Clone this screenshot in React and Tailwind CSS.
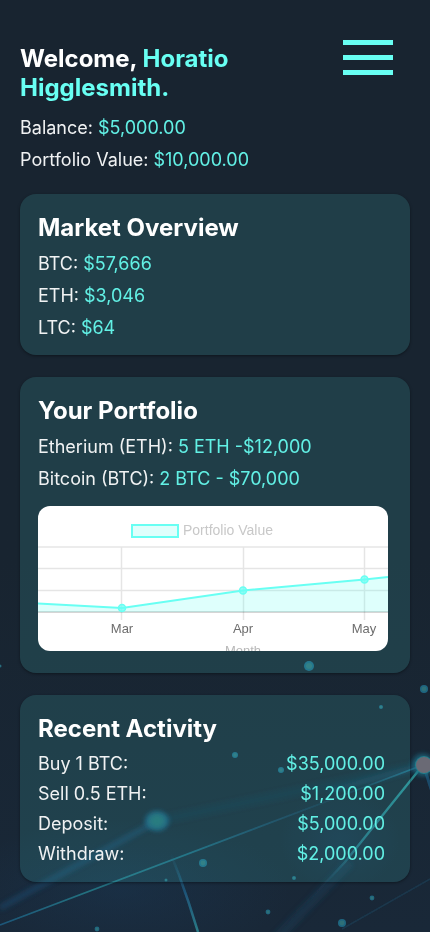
const MARKET = [
  { label: 'BTC:', value: '$57,666' },
  { label: 'ETH:', value: '$3,046' },
  { label: 'LTC:', value: '$64' },
];

const HOLDINGS = [
  { label: 'Etherium (ETH):', value: '5 ETH -$12,000' },
  { label: 'Bitcoin (BTC):', value: '2 BTC - $70,000' },
];

const ACTIVITY = [
  { label: 'Buy 1 BTC:', value: '$35,000.00' },
  { label: 'Sell 0.5 ETH:', value: '$1,200.00' },
  { label: 'Deposit:', value: '$5,000.00' },
  { label: 'Withdraw:', value: '$2,000.00' },
];

const DOTS = [
  [309, 666, 5], [424, 689, 4], [381, 707, 2], [235, 755, 3], [281, 770, 3],
  [203, 863, 4], [166, 880, 1.5], [294, 878, 2], [268, 912, 2.4], [372, 898, 2.4],
  [342, 923, 4], [97, 929, 2.4], [0, 666, 1.5],
];

function NetworkBackdrop() {
  return (
    <svg
      aria-hidden="true"
      viewBox="0 0 430 932"
      preserveAspectRatio="xMidYMax slice"
      className="pointer-events-none absolute inset-0 -z-10 h-full w-full"
    >
      <defs>
        <linearGradient id="thin" gradientUnits="userSpaceOnUse" x1="0" y1="925" x2="423" y2="765">
          <stop offset="0" stopColor="#1d5678" />
          <stop offset="0.2" stopColor="#23707f" />
          <stop offset="0.45" stopColor="#1f6278" />
          <stop offset="0.65" stopColor="#1e5070" stopOpacity="0.6" />
          <stop offset="0.8" stopColor="#1e5070" stopOpacity="0.2" />
          <stop offset="1" stopColor="#23708a" />
        </linearGradient>
        <linearGradient id="ray" gradientUnits="userSpaceOnUse" x1="423" y1="765" x2="280" y2="932">
          <stop offset="0" stopColor="#2b8d90" />
          <stop offset="0.5" stopColor="#24687b" />
          <stop offset="0.7" stopColor="#1d4561" stopOpacity="0.2" />
          <stop offset="1" stopColor="#1b3247" stopOpacity="0" />
        </linearGradient>
        <linearGradient id="leg" gradientUnits="userSpaceOnUse" x1="157" y1="821" x2="198" y2="932">
          <stop offset="0.3" stopColor="#1f5a78" stopOpacity="0" />
          <stop offset="0.65" stopColor="#1f5478" />
          <stop offset="1" stopColor="#2a7a86" />
        </linearGradient>
        <radialGradient id="haze">
          <stop offset="0" stopColor="#1a3a58" stopOpacity="0.4" />
          <stop offset="1" stopColor="#1a3a58" stopOpacity="0" />
        </radialGradient>
        <filter id="soft1" x="-50%" y="-50%" width="200%" height="200%"><feGaussianBlur stdDeviation="0.7" /></filter>
        <filter id="soft3" x="-50%" y="-50%" width="200%" height="200%"><feGaussianBlur stdDeviation="2.5" /></filter>
      </defs>
      <ellipse cx="120" cy="890" rx="170" ry="70" fill="url(#haze)" />
      <ellipse cx="340" cy="840" rx="60" ry="50" fill="url(#haze)" />
      <g filter="url(#soft3)" fill="none">
        <path d="M0 908L157 821" stroke="#1d5078" strokeWidth="5" opacity="0.55" />
        <path d="M157 821L423 765" stroke="#1e5070" strokeWidth="9" opacity="0.14" />
        <path d="M350 862L275 940" stroke="#1d4768" strokeWidth="10" opacity="0.3" />
        <path d="M330 791L423 766" stroke="#1f5f85" strokeWidth="4" opacity="0.4" />
      </g>
      <g filter="url(#soft1)" fill="none">
        <path d="M0 925L423 765" stroke="url(#thin)" strokeWidth="1.8" />
        <path d="M423 765L345 862L280 932" stroke="url(#ray)" strokeWidth="2.4" />
        <path d="M157 821Q180 872 198 932" stroke="url(#leg)" strokeWidth="2.6" />
        <path d="M342 929L430 879" stroke="#1e4560" strokeWidth="1.5" opacity="0.5" />
        <path d="M425 770L433 795" stroke="#1f5a80" strokeWidth="3" opacity="0.7" />
      </g>
      <ellipse cx="157" cy="821" rx="12" ry="10" fill="#1d5f85" filter="url(#soft3)" opacity="0.8" />
      <ellipse cx="157" cy="821" rx="8" ry="7" fill="#216a70" filter="url(#soft3)" />
      {DOTS.map(([x, y, r]) => (
        <g key={`${x}-${y}`} filter="url(#soft1)">
          <circle cx={x} cy={y} r={r} fill="#1f6680" />
          <circle cx={x} cy={y} r={r * 0.6} fill="#2f7078" />
        </g>
      ))}
      <circle cx="423" cy="765" r="11" fill="#1f7088" filter="url(#soft3)" opacity="0.8" />
      <circle cx="424" cy="765" r="9" fill="#237f8c" filter="url(#soft1)" />
      <circle cx="424" cy="765" r="8" fill="#6a6a75" filter="url(#soft1)" />
    </svg>
  );
}

function Rows({ items }) {
  return (
    <dl className="text-lg leading-8 font-normal text-[#f0f2f3]">
      {items.map(({ label, value }) => (
        <div key={label} className="flex gap-[5px]">
          <dt>{label}</dt>
          <dd className="text-[#62f0e5]">{value}</dd>
        </div>
      ))}
    </dl>
  );
}

function Card({ title, className, children }) {
  return (
    <section className={`rounded-2xl bg-[rgba(90,255,243,0.12)] pt-[19px] pr-[22px] pl-[18px] shadow-[0_1px_3px_rgba(0,0,0,0.4)] ${className}`}>
      <h2 className="mb-[6px] text-2xl leading-[29px] font-bold">{title}</h2>
      {children}
    </section>
  );
}

function PortfolioChart() {
  return (
    <svg
      role="img"
      aria-label="Portfolio Value by Month"
      viewBox="0 0 350 145"
      className="mt-[11px] block h-auto w-full rounded-xl bg-white font-['Liberation_Sans',Arial,sans-serif] text-[13px]"
    >
      <g stroke="#000" strokeOpacity="0.1" strokeWidth="1.5" fill="none">
        <path d="M0 41H350M0 62.500H350M0 84.500H350M83.500 41V114M205.500 41V114M326.500 41V114" />
        <path d="M0 106H350" strokeOpacity="0.22" />
      </g>
      <path d="M0 97.500L84 102L205 84.500L326.500 73.500L350 71V106H0Z" fill="#68fff3" fillOpacity="0.22" />
      <path d="M0 97.500L84 102L205 84.500L326.500 73.500L350 71" fill="none" stroke="#68fff3" strokeWidth="2" />
      <g fill="#68fff3" fillOpacity="0.7" stroke="#68fff3" strokeWidth="1.5">
        <circle cx="84" cy="102" r="3.5" />
        <circle cx="205" cy="84.500" r="3.5" />
        <circle cx="326.500" cy="73.500" r="3.5" />
      </g>
      <rect x="94" y="19" width="46" height="12" fill="#dffffc" stroke="#68fff3" strokeWidth="2" />
      <text x="145" y="29" fill="#c8c8c8" className="text-sm">Portfolio Value</text>
      <g fill="#6d6d6d" textAnchor="middle">
        <text x="84" y="127">Mar</text>
        <text x="205" y="127">Apr</text>
        <text x="326" y="127">May</text>
      </g>
      <text x="205" y="149" fill="#b8b8b8" textAnchor="middle">Month</text>
    </svg>
  );
}

export default function App() {
  return (
    <div className="relative isolate min-h-screen overflow-hidden bg-linear-to-b from-[#182430] from-60% to-[#192838] px-5 pb-8 font-['Inter',sans-serif] text-white">
      <NetworkBackdrop />
      <header className="pt-11">
        <div className="flex items-start justify-between pr-[17px]">
          <h1 className="max-w-60 text-2xl leading-[29px] font-bold">
            Welcome, <span className="text-[#68fff3]">Horatio Higglesmith.</span>
          </h1>
          <button type="button" aria-label="Open menu" className="-mt-1 flex w-[50px] flex-col gap-[10px]">
            <span className="h-[5px] w-full bg-[#68fff3]" />
            <span className="h-[5px] w-full bg-[#68fff3]" />
            <span className="h-[5px] w-full bg-[#68fff3]" />
          </button>
        </div>
        <div className="mt-[10px]">
          <Rows
            items={[
              { label: 'Balance:', value: '$5,000.00' },
              { label: 'Portfolio Value:', value: '$10,000.00' },
            ]}
          />
        </div>
      </header>

      <main className="mt-[18px] flex flex-col gap-[22px]">
        <Card title="Market Overview" className="pb-[11px]">
          <Rows items={MARKET} />
        </Card>
        <Card title="Your Portfolio" className="pb-[22px]">
          <Rows items={HOLDINGS} />
          <PortfolioChart />
        </Card>
        <Card title="Recent Activity" className="pb-[13px]">
          <dl className="pr-[3px] text-lg leading-[30px] font-normal text-[#f0f2f3]">
            {ACTIVITY.map(({ label, value }) => (
              <div key={label} className="flex justify-between">
                <dt>{label}</dt>
                <dd className="text-[#62f0e5]">{value}</dd>
              </div>
            ))}
          </dl>
        </Card>
      </main>
    </div>
  );
}
